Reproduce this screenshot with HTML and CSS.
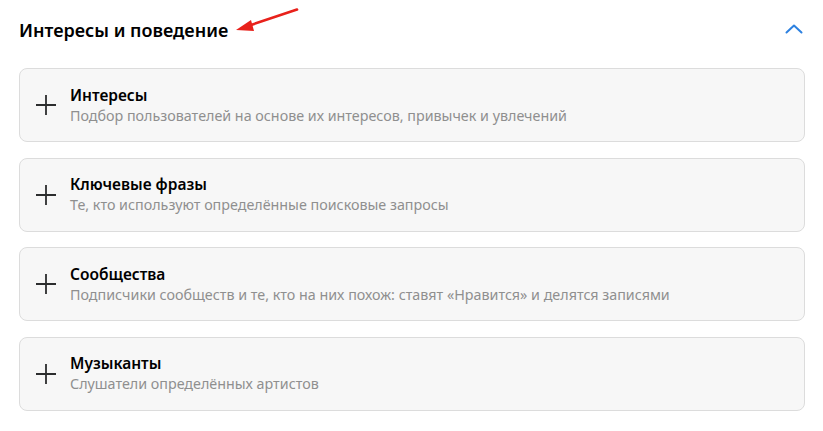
FILE: index.html
```html
<!DOCTYPE html>
<html lang="ru">
<head>
<meta charset="utf-8">
<link rel="stylesheet" href="styles.css">
</head>
<body>
<section class="section">
  <header class="section-head">
    <h2 class="section-title">Интересы и поведение</h2>
    <svg class="pointer" width="66" height="28" viewBox="0 0 66 28" aria-hidden="true">
      <line x1="63" y1="2.5" x2="14" y2="19" stroke="#e8211b" stroke-width="2.6" stroke-linecap="round"/>
      <polygon points="2,23 17,13 20,24" fill="#e8211b"/>
    </svg>
    <svg class="chevron" width="18" height="10" viewBox="0 0 18 10" aria-hidden="true">
      <polyline points="1.5,8.5 9,1.5 16.5,8.5" fill="none" stroke="#2d81e0" stroke-width="2" stroke-linecap="round" stroke-linejoin="round"/>
    </svg>
  </header>
  <div class="cards">
    <div class="card">
      <svg class="plus" width="20" height="20" viewBox="0 0 20 20"><path d="M10 0v20M0 10h20" stroke="#2c2d2e" stroke-width="1.8"/></svg>
      <div class="card-text">
        <div class="card-title">Интересы</div>
        <div class="card-sub">Подбор пользователей на основе их интересов, привычек и увлечений</div>
      </div>
    </div>
    <div class="card">
      <svg class="plus" width="20" height="20" viewBox="0 0 20 20"><path d="M10 0v20M0 10h20" stroke="#2c2d2e" stroke-width="1.8"/></svg>
      <div class="card-text">
        <div class="card-title">Ключевые фразы</div>
        <div class="card-sub">Те, кто используют определённые поисковые запросы</div>
      </div>
    </div>
    <div class="card">
      <svg class="plus" width="20" height="20" viewBox="0 0 20 20"><path d="M10 0v20M0 10h20" stroke="#2c2d2e" stroke-width="1.8"/></svg>
      <div class="card-text">
        <div class="card-title">Сообщества</div>
        <div class="card-sub">Подписчики сообществ и те, кто на них похож: ставят «Нравится» и делятся записями</div>
      </div>
    </div>
    <div class="card">
      <svg class="plus" width="20" height="20" viewBox="0 0 20 20"><path d="M10 0v20M0 10h20" stroke="#2c2d2e" stroke-width="1.8"/></svg>
      <div class="card-text">
        <div class="card-title">Музыканты</div>
        <div class="card-sub">Слушатели определённых артистов</div>
      </div>
    </div>
  </div>
</section>
</body>
</html>
```
FILE: styles.css
```css
* { box-sizing: border-box; }
html, body { margin: 0; padding: 0; background: #fff; }
body {
  font-family: "Noto Sans", "Open Sans", sans-serif;
  color: #000;
}
.section {
  padding: 8px 18px 0 19px;
}
.section-head {
  display: flex;
  align-items: center;
  height: 44px;
}
.section-title {
  margin: 0;
  font-size: 18px;
  font-weight: 600;
  line-height: 24px;
  color: #000;
}
.pointer {
  margin-left: 6px;
  margin-top: -18px;
}
.chevron {
  margin-left: auto;
  margin-right: 2px;
  margin-top: -2px;
}
.cards {
  display: flex;
  flex-direction: column;
  gap: 15.67px;
  margin-top: 16px;
}
.card {
  display: flex;
  align-items: center;
  height: 74px;
  background: #f7f7f7;
  border: 1px solid #dcdcdc;
  border-radius: 8px;
  padding: 0 16px;
}
.plus { flex: none; margin-right: 14px; }
.card-title {
  font-size: 15.5px;
  font-weight: 600;
  line-height: 21px;
  color: #000;
}
.card-sub {
  font-size: 14.3px;
  line-height: 20px;
  color: #8f8f8f;
}
```
